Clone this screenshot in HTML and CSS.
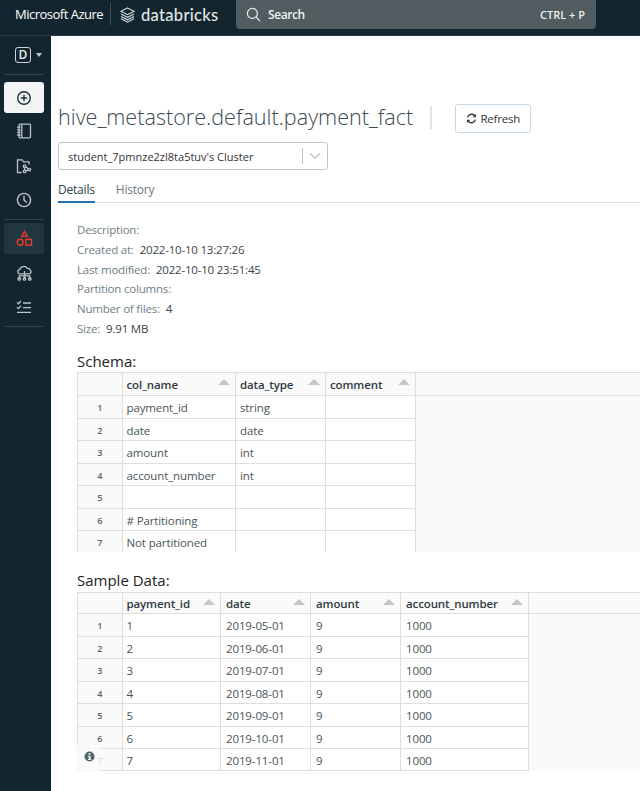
FILE: index.html
```html
<!DOCTYPE html>
<html lang="en">
<head>
    <meta charset="UTF-8">
    <meta name="viewport" content="width=device-width, initial-scale=1.0">
    <title>Data</title>
    <link rel="stylesheet" href="styles.css">
</head>
<body>
    <header class="topbar">
        <span class="azure">Microsoft Azure</span>
        <span class="top-sep"></span>
        <span class="brand">
            <svg class="brand-icon" viewBox="0 0 16 17" width="15" height="16" fill="none" stroke="#d5dadb" stroke-width="1.2">
                <path d="M8 1 15 4.6 8 8.2 1 4.6Z"/>
                <path d="M1 7.4 8 11 15 7.4"/>
                <path d="M1 10 8 13.6 15 10"/>
                <path d="M1 12.6 8 16.2 15 12.6"/>
            </svg>
            <span class="brand-name">databricks</span>
        </span>
        <div class="search">
            <svg viewBox="0 0 16 16" width="15" height="15" fill="none" stroke="#e6e9ea" stroke-width="1.3">
                <circle cx="6.8" cy="6.8" r="5.3"/>
                <path d="M10.7 10.7 15 15"/>
            </svg>
            <span class="search-label">Search</span>
            <span class="search-key">CTRL + P</span>
        </div>
    </header>

    <div class="app">
        <nav class="sidebar">
            <div class="persona">
                <span class="persona-badge">D</span>
                <span class="caret"></span>
            </div>
            <hr class="side-rule">
            <div class="side-item create">
                <svg viewBox="0 0 16 16" width="16" height="16" fill="none" stroke="#1b3139" stroke-width="1.4">
                    <circle cx="8" cy="8" r="6.3"/>
                    <path d="M8 4.8v6.4M4.8 8h6.4"/>
                </svg>
            </div>
            <div class="side-item">
                <svg viewBox="0 0 16 16" width="16" height="16" fill="none" stroke="#b9c2c5" stroke-width="1.3">
                    <rect x="3" y="1.2" width="11.5" height="13.6" rx="0.8"/>
                    <path d="M5.8 1.2v13.6M1 4.2h3.6M1 6.8h3.6M1 9.4h3.6M1 12h3.6"/>
                </svg>
            </div>
            <div class="side-item">
                <svg viewBox="0 0 16 16" width="16" height="16" fill="none" stroke="#b9c2c5" stroke-width="1.3">
                    <path d="M5.5 14.5H1.5V1.8h4.6l1.6 2h5.4v2.6"/>
                    <circle cx="8.6" cy="8.2" r="1.3"/>
                    <circle cx="8.6" cy="13.4" r="1.3"/>
                    <circle cx="13.4" cy="11.6" r="1.3"/>
                    <path d="M8.6 9.5v2.6M9.8 8.8l2.6 1.9M9.8 12.8l2.4-1"/>
                </svg>
            </div>
            <div class="side-item">
                <svg viewBox="0 0 16 16" width="16" height="16" fill="none" stroke="#b9c2c5" stroke-width="1.4">
                    <circle cx="8" cy="8" r="6.6"/>
                    <path d="M8 3.8V8l2.8 2.6"/>
                </svg>
            </div>
            <hr class="side-rule">
            <div class="side-item active">
                <svg viewBox="0 0 16 16" width="17" height="17" fill="none" stroke="#f0372b" stroke-width="1.3">
                    <path d="M8 1.2 10.6 6H5.4Z"/>
                    <circle cx="4" cy="11.5" r="2.8"/>
                    <rect x="9.2" y="8.8" width="5.4" height="5.4"/>
                </svg>
            </div>
            <div class="side-item">
                <svg viewBox="0 0 16 16" width="17" height="17" fill="none" stroke="#b9c2c5" stroke-width="1.2">
                    <path d="M3.2 9.2C1 8.6 1 5.6 3.4 5.3 4 2.2 8.8 1 10.6 4.2 13.6 3.8 15.4 8 12.8 9.2H3.2Z"/>
                    <path d="M3 14V11.2h10V14M8 6.5V14"/>
                    <circle cx="3" cy="14" r="1.2"/>
                    <circle cx="8" cy="14" r="1.2"/>
                    <circle cx="13" cy="14" r="1.2"/>
                </svg>
            </div>
            <div class="side-item">
                <svg viewBox="0 0 16 16" width="16" height="16" fill="none" stroke="#b9c2c5" stroke-width="1.3">
                    <path d="M1 3.4 2.4 4.8 5 2M1 8.2 2.4 9.6 5 6.8"/>
                    <path d="M7 4h8M7 8.6h8M1 13.4h14"/>
                </svg>
            </div>
            <hr class="side-rule">
        </nav>

        <main class="content">
            <div class="title-row">
                <h1 class="page-title">hive_metastore.default.payment_fact</h1>
                <span class="title-sep"></span>
                <button class="refresh">
                    <svg viewBox="0 0 12 12" width="11" height="11" fill="#2b3a40">
                        <path d="M10.6 4.6H7.4l1.3-1.3A3.6 3.6 0 0 0 2.6 4.6H1A5.2 5.2 0 0 1 9.8 2.2L11 1v3.2ZM1.4 7.4h3.2L3.3 8.7a3.6 3.6 0 0 0 6.1-1.3H11a5.2 5.2 0 0 1-8.8 2.4L1 11V7.8Z"/>
                    </svg>
                    Refresh
                </button>
            </div>

            <div class="cluster">
                <span class="cluster-name">student_7pmnze2zl8ta5tuv's Cluster</span>
                <span class="cluster-arrow">
                    <svg viewBox="0 0 12 8" width="12" height="8" fill="none" stroke="#c4c9cb" stroke-width="1.6">
                        <path d="M1 1.2 6 6.2 11 1.2"/>
                    </svg>
                </span>
            </div>

            <div class="tabs">
                <span class="tab selected">Details</span>
                <span class="tab">History</span>
            </div>

            <dl class="meta">
                <div class="meta-row"><dt>Description:</dt></div>
                <div class="meta-row"><dt>Created at:</dt><dd>2022-10-10 13:27:26</dd></div>
                <div class="meta-row"><dt>Last modified:</dt><dd>2022-10-10 23:51:45</dd></div>
                <div class="meta-row"><dt>Partition columns:</dt></div>
                <div class="meta-row"><dt>Number of files:</dt><dd>4</dd></div>
                <div class="meta-row"><dt>Size:</dt><dd>9.91 MB</dd></div>
            </dl>

            <h2 class="section-title schema-title">Schema:</h2>
            <div class="grid schema">
                <div class="grid-row head"><span></span><span class="sort">col_name</span><span class="sort">data_type</span><span class="sort">comment</span></div>
                <div class="grid-row"><span>1</span><span>payment_id</span><span>string</span><span></span></div>
                <div class="grid-row"><span>2</span><span>date</span><span>date</span><span></span></div>
                <div class="grid-row"><span>3</span><span>amount</span><span>int</span><span></span></div>
                <div class="grid-row"><span>4</span><span>account_number</span><span>int</span><span></span></div>
                <div class="grid-row"><span>5</span><span></span><span></span><span></span></div>
                <div class="grid-row"><span>6</span><span># Partitioning</span><span></span><span></span></div>
                <div class="grid-row last"><span>7</span><span>Not partitioned</span><span></span><span></span></div>
            </div>

            <h2 class="section-title sample-title">Sample Data:</h2>
            <div class="grid sample">
                <div class="grid-row head"><span></span><span class="sort">payment_id</span><span class="sort">date</span><span class="sort">amount</span><span class="sort">account_number</span></div>
                <div class="grid-row"><span>1</span><span>1</span><span>2019-05-01</span><span>9</span><span>1000</span></div>
                <div class="grid-row"><span>2</span><span>2</span><span>2019-06-01</span><span>9</span><span>1000</span></div>
                <div class="grid-row"><span>3</span><span>3</span><span>2019-07-01</span><span>9</span><span>1000</span></div>
                <div class="grid-row"><span>4</span><span>4</span><span>2019-08-01</span><span>9</span><span>1000</span></div>
                <div class="grid-row"><span>5</span><span>5</span><span>2019-09-01</span><span>9</span><span>1000</span></div>
                <div class="grid-row"><span>6</span><span>6</span><span>2019-10-01</span><span>9</span><span>1000</span></div>
                <div class="grid-row end"><span>7</span><span>7</span><span>2019-11-01</span><span>9</span><span>1000</span></div>
                <div class="info-badge">
                    <svg viewBox="0 0 12 12" width="11" height="11">
                        <circle cx="6" cy="6" r="5.5" fill="#55666c"/>
                        <path d="M5 2.4h2v1.7H5ZM4.6 5.2h2.5v3.6h.7v1H4.4v-1h.8V6.2h-.6Z" fill="#fff"/>
                    </svg>
                </div>
            </div>
        </main>
    </div>
</body>
</html>
```

FILE: styles.css
```css
* {
    box-sizing: border-box;
}
html, body {
    height: 100%;
}
body {
    margin: 0;
    overflow: hidden;
    font-family: 'Open Sans', 'Noto Sans', sans-serif;
    font-size: 12px;
    color: #333;
    background: #fff;
}

/* top bar */
.topbar {
    height: 36px;
    display: flex;
    align-items: flex-start;
    background: #13262f;
    border-bottom: 1px solid #2c3d44;
    color: #fff;
}
.azure {
    width: 110px;
    height: 29px;
    padding-left: 15px;
    line-height: 29px;
    font-size: 13px;
    letter-spacing: -0.5px;
    white-space: nowrap;
}
.top-sep {
    width: 1px;
    height: 22px;
    margin-top: 3px;
    background: #3d4e55;
}
.brand {
    width: 125px;
    height: 29px;
    display: flex;
    align-items: center;
    padding-left: 9px;
}
.brand-icon {
    margin-right: 6px;
}
.brand-name {
    font-family: 'Lato', sans-serif;
    font-size: 16.5px;
    font-weight: 500;
    color: #e4e7e8;
    letter-spacing: 0.3px;
}
.search {
    width: 360px;
    height: 29px;
    display: flex;
    align-items: center;
    padding: 0 11px 0 10px;
    background: #505c60;
    border-radius: 0 0 4px 4px;
    color: #eef0f1;
    font-size: 12px;
    font-weight: 600;
}
.search-label {
    margin-left: 7px;
    letter-spacing: -0.4px;
}
.search-key {
    margin-left: auto;
    font-size: 11px;
}

/* sidebar */
.app {
    height: 755px;
    display: flex;
}
.sidebar {
    width: 51px;
    flex: none;
    display: flex;
    flex-direction: column;
    padding-left: 4px;
    background: #13262f;
}
.persona {
    width: 40px;
    height: 38px;
    display: flex;
    align-items: center;
    gap: 5px;
    padding-left: 11px;
}
.persona-badge {
    width: 16px;
    height: 16px;
    border: 1px solid #cfd5d7;
    border-radius: 3px;
    color: #e8ebec;
    font-size: 12px;
    font-weight: 600;
    line-height: 14px;
    text-align: center;
}
.caret {
    width: 0;
    height: 0;
    border-left: 3px solid transparent;
    border-right: 3px solid transparent;
    border-top: 4px solid #c4cbce;
}
.side-rule {
    width: 40px;
    height: 1px;
    margin: 0;
    border: 0;
    background: #33454c;
}
.side-item {
    width: 40px;
    height: 31px;
    flex: none;
    margin-bottom: 3.5px;
    display: flex;
    align-items: center;
    justify-content: center;
    border-radius: 3px;
}
.side-item.create {
    margin-top: 7px;
    margin-bottom: 2.5px;
    background: #f3f4f5;
}
.side-item.active {
    margin-top: 3px;
    margin-bottom: 2.5px;
    background: #22363f;
}

/* main */
.content {
    flex: 1;
    min-width: 0;
    padding: 65px 0 0 7px;
    overflow: hidden;
}
.title-row {
    display: flex;
    align-items: flex-start;
    height: 32px;
}
.page-title {
    margin: 0;
    font-size: 21.6px;
    font-weight: 300;
    color: #3a4a50;
    white-space: nowrap;
    line-height: 32px;
}
.title-sep {
    width: 2px;
    height: 23px;
    margin: 5px 0 0 17px;
    background: #ecdfd9;
}
.refresh {
    width: 76px;
    height: 29px;
    margin: 3px 0 0 23px;
    display: flex;
    align-items: center;
    justify-content: center;
    gap: 3px;
    padding: 0;
    background: #fff;
    border: 1px solid #c6d8e6;
    border-radius: 3px;
    font-family: inherit;
    font-size: 11.5px;
    letter-spacing: -0.2px;
    color: #333;
}
.cluster {
    width: 270px;
    height: 28px;
    margin-top: 9px;
    display: flex;
    align-items: center;
    border: 1px solid #c4c4c4;
    border-radius: 3px;
}
.cluster-name {
    flex: 1;
    padding-left: 9px;
    font-size: 11px;
    color: #333;
    white-space: nowrap;
}
.cluster-arrow {
    width: 25px;
    height: 16px;
    display: flex;
    align-items: center;
    justify-content: center;
    border-left: 1px solid #c4c4c4;
}
.tabs {
    height: 33px;
    display: flex;
    gap: 21px;
    padding-top: 11px;
    border-bottom: 1px solid #dedede;
    letter-spacing: -0.2px;
}
.tab {
    height: 22px;
    font-size: 12px;
    color: #6b7a80;
}
.tab.selected {
    color: #2a4048;
    border-bottom: 2px solid #2272b4;
}

/* details */
.meta {
    margin: 17px 0 0 19px;
    font-size: 11.5px;
    letter-spacing: -0.2px;
}
.meta-row {
    display: flex;
    gap: 6px;
    height: 19.8px;
    line-height: 19.8px;
}
.meta dt {
    color: #6f7e84;
}
.meta dd {
    margin: 0;
    color: #3a4449;
}
.section-title {
    margin: 0 0 0 19px;
    font-size: 15px;
    font-weight: 400;
    color: #222;
    line-height: 20px;
}
.schema-title {
    margin-top: 12px;
    margin-bottom: 1px;
}
.sample-title {
    margin-top: 18px;
    margin-bottom: 2px;
}

/* result tables */
.grid {
    position: relative;
    margin-left: 19px;
    background: #fafafa;
    border-top: 1px solid #dedede;
    border-left: 1px solid #dedede;
    font-size: 11.5px;
    letter-spacing: -0.12px;
}
.grid-row {
    display: grid;
    grid-template-rows: 100%;
    height: 22px;
}
.grid-row:nth-child(even) {
    height: 23px;
}
.schema .grid-row {
    grid-template-columns: 44.5px 113.5px 90px 90px;
}
.sample .grid-row {
    grid-template-columns: 44.5px 98.5px 90px 90px 128px;
}
.schema .grid-row.last {
    height: 21px;
}
.sample .grid-row.end {
    height: 22px;
}
.grid-row span {
    position: relative;
    padding-left: 4px;
    line-height: 23px;
    color: #4a5458;
    background: #fff;
    border-right: 1px solid #dedede;
    border-bottom: 1px solid #dedede;
    white-space: nowrap;
}
.sample .grid-row span:nth-child(n+3) {
    padding-left: 5px;
}
.grid-row.last span {
    border-bottom: 0;
}
.grid-row span:first-child {
    padding: 0;
    text-align: center;
    font-size: 9px;
    font-weight: 600;
    color: #55636a;
    background: #fafafa;
}
.grid-row.head {
    height: 23px;
    border-bottom: 1px solid #dedede;
}
.sample .grid-row.head {
    height: 21px;
}
.grid-row.head span {
    line-height: 23px;
    font-weight: 600;
    color: #2f3a3f;
    background: #fafafa;
    border-bottom: 0;
}
.sample .grid-row.head span {
    line-height: 22px;
}
.sort::after {
    content: "";
    position: absolute;
    top: 6px;
    right: 5px;
    border-left: 6px solid transparent;
    border-right: 6px solid transparent;
    border-bottom: 6px solid #c6c6c6;
}
.info-badge {
    position: absolute;
    left: -1px;
    bottom: 0;
    width: 25px;
    height: 28px;
    display: flex;
    align-items: center;
    justify-content: center;
    background: rgba(250, 250, 250, 0.8);
}
```
